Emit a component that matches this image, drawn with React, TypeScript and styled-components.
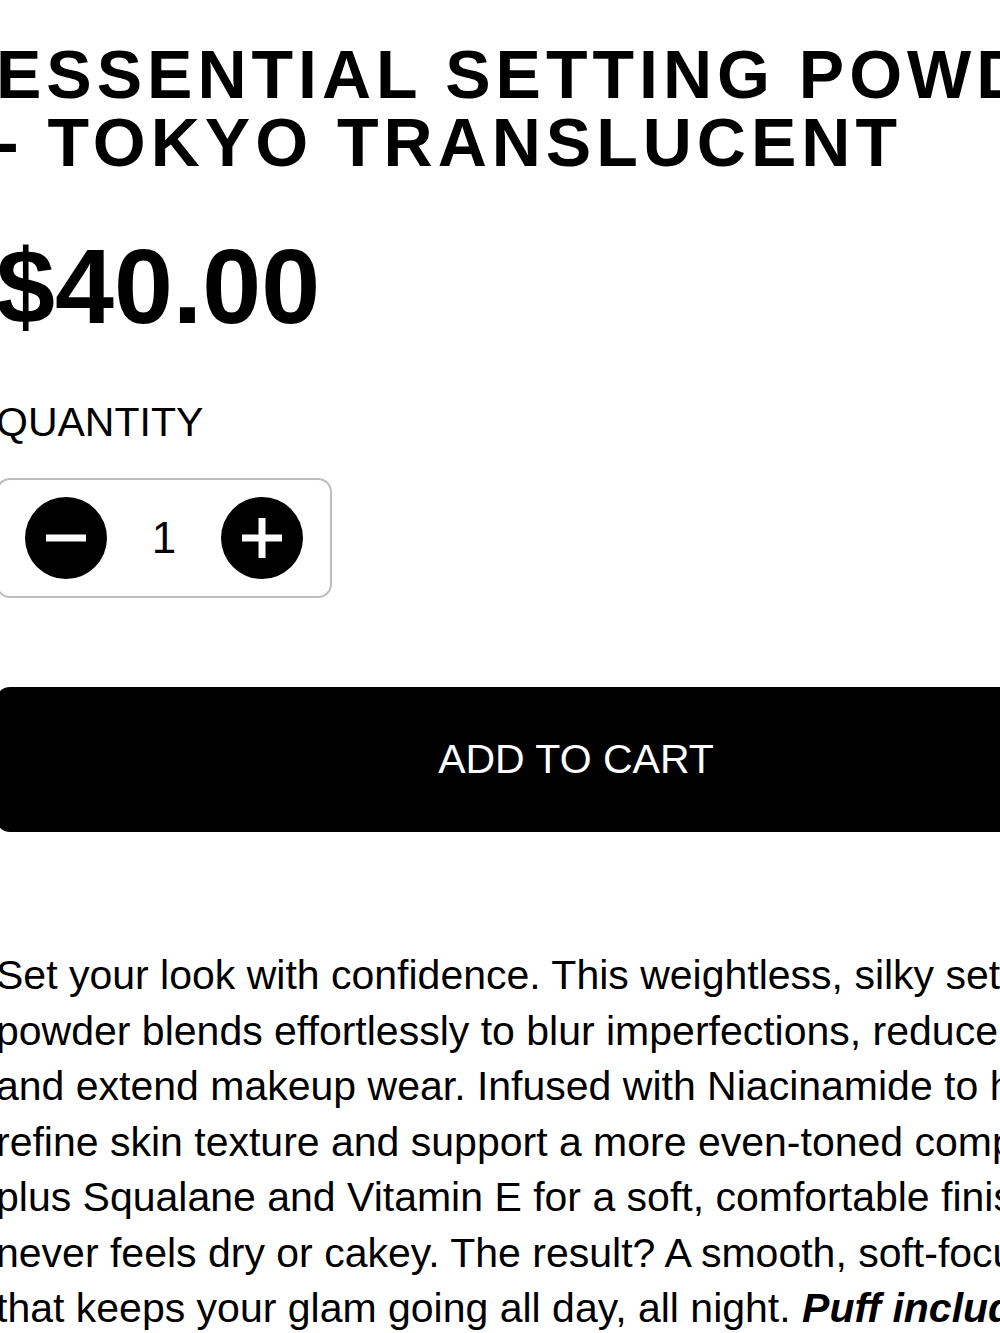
import styled, { createGlobalStyle } from 'styled-components'
import { useState } from 'react'

const GlobalStyle = createGlobalStyle`
  html, body {
    margin: 0;
    padding: 0;
    background: #fff;
    overflow: hidden;
  }
`

const Page = styled.div`
  width: 1160px;
  margin-left: -4px;
  padding-top: 40px;
  font-family: 'Liberation Sans', Arial, Helvetica, sans-serif;
  color: #000;
`

const Title = styled.h1`
  margin: 0;
  font-size: 68px;
  line-height: 68px;
  font-weight: 700;
  letter-spacing: 5px;
  text-transform: uppercase;
`

const Price = styled.div`
  margin-top: 57px;
  font-size: 106px;
  line-height: 1;
  font-weight: 700;
`

const Label = styled.div`
  margin-top: 59px;
  font-size: 41px;
  line-height: 48px;
  text-transform: uppercase;
`

const Stepper = styled.div`
  margin-top: 32px;
  display: inline-flex;
  align-items: center;
  box-sizing: border-box;
  height: 120px;
  padding: 0 27px;
  border: 2px solid #bdbdbd;
  border-radius: 14px;
`

const RoundButton = styled.button`
  width: 82px;
  height: 82px;
  padding: 0;
  border: none;
  background: none;
  cursor: pointer;
  display: block;

  svg {
    display: block;
  }
`

const Count = styled.span`
  width: 114px;
  text-align: center;
  font-size: 44px;
  line-height: 1;
`

const CartButton = styled.button`
  display: block;
  width: 100%;
  height: 145px;
  margin-top: 89px;
  border: none;
  border-radius: 14px;
  background: #000;
  color: #fff;
  font-family: inherit;
  font-size: 41px;
  text-transform: uppercase;
  cursor: pointer;
`

const Description = styled.p`
  margin: 116px 0 0;
  font-size: 41px;
  line-height: 55.5px;

  em {
    font-weight: 700;
  }
`

const StepIcon = ({ plus }: { plus?: boolean }) => (
  <svg width="82" height="82" viewBox="0 0 82 82">
    <circle cx="41" cy="41" r="41" fill="#000" />
    <rect x="21" y="37.5" width="40" height="7" fill="#fff" />
    {plus && <rect x="37.5" y="21" width="7" height="40" fill="#fff" />}
  </svg>
)

const App = () => {
  const [qty, setQty] = useState<number>(1)
  return (
    <>
      <GlobalStyle />
      <Page>
        <Title>Essential Setting Powder - Tokyo Translucent</Title>
        <Price>$40.00</Price>
        <Label>Quantity</Label>
        <Stepper>
          <RoundButton aria-label="Decrease" onClick={() => setQty(Math.max(1, qty - 1))}>
            <StepIcon />
          </RoundButton>
          <Count>{qty}</Count>
          <RoundButton aria-label="Increase" onClick={() => setQty(qty + 1)}>
            <StepIcon plus />
          </RoundButton>
        </Stepper>
        <CartButton>Add to cart</CartButton>
        <Description>
          Set your look with confidence. This weightless, silky setting powder blends
          effortlessly to blur imperfections, reduce shine, and extend makeup wear. Infused
          with Niacinamide to help refine skin texture and support a more even-toned
          complexion, plus Squalane and Vitamin E for a soft, comfortable finish that never
          feels dry or cakey. The result? A smooth, soft-focus finish that keeps your glam
          going all day, all night. <em>Puff included.</em>
        </Description>
      </Page>
    </>
  )
}

export default App
